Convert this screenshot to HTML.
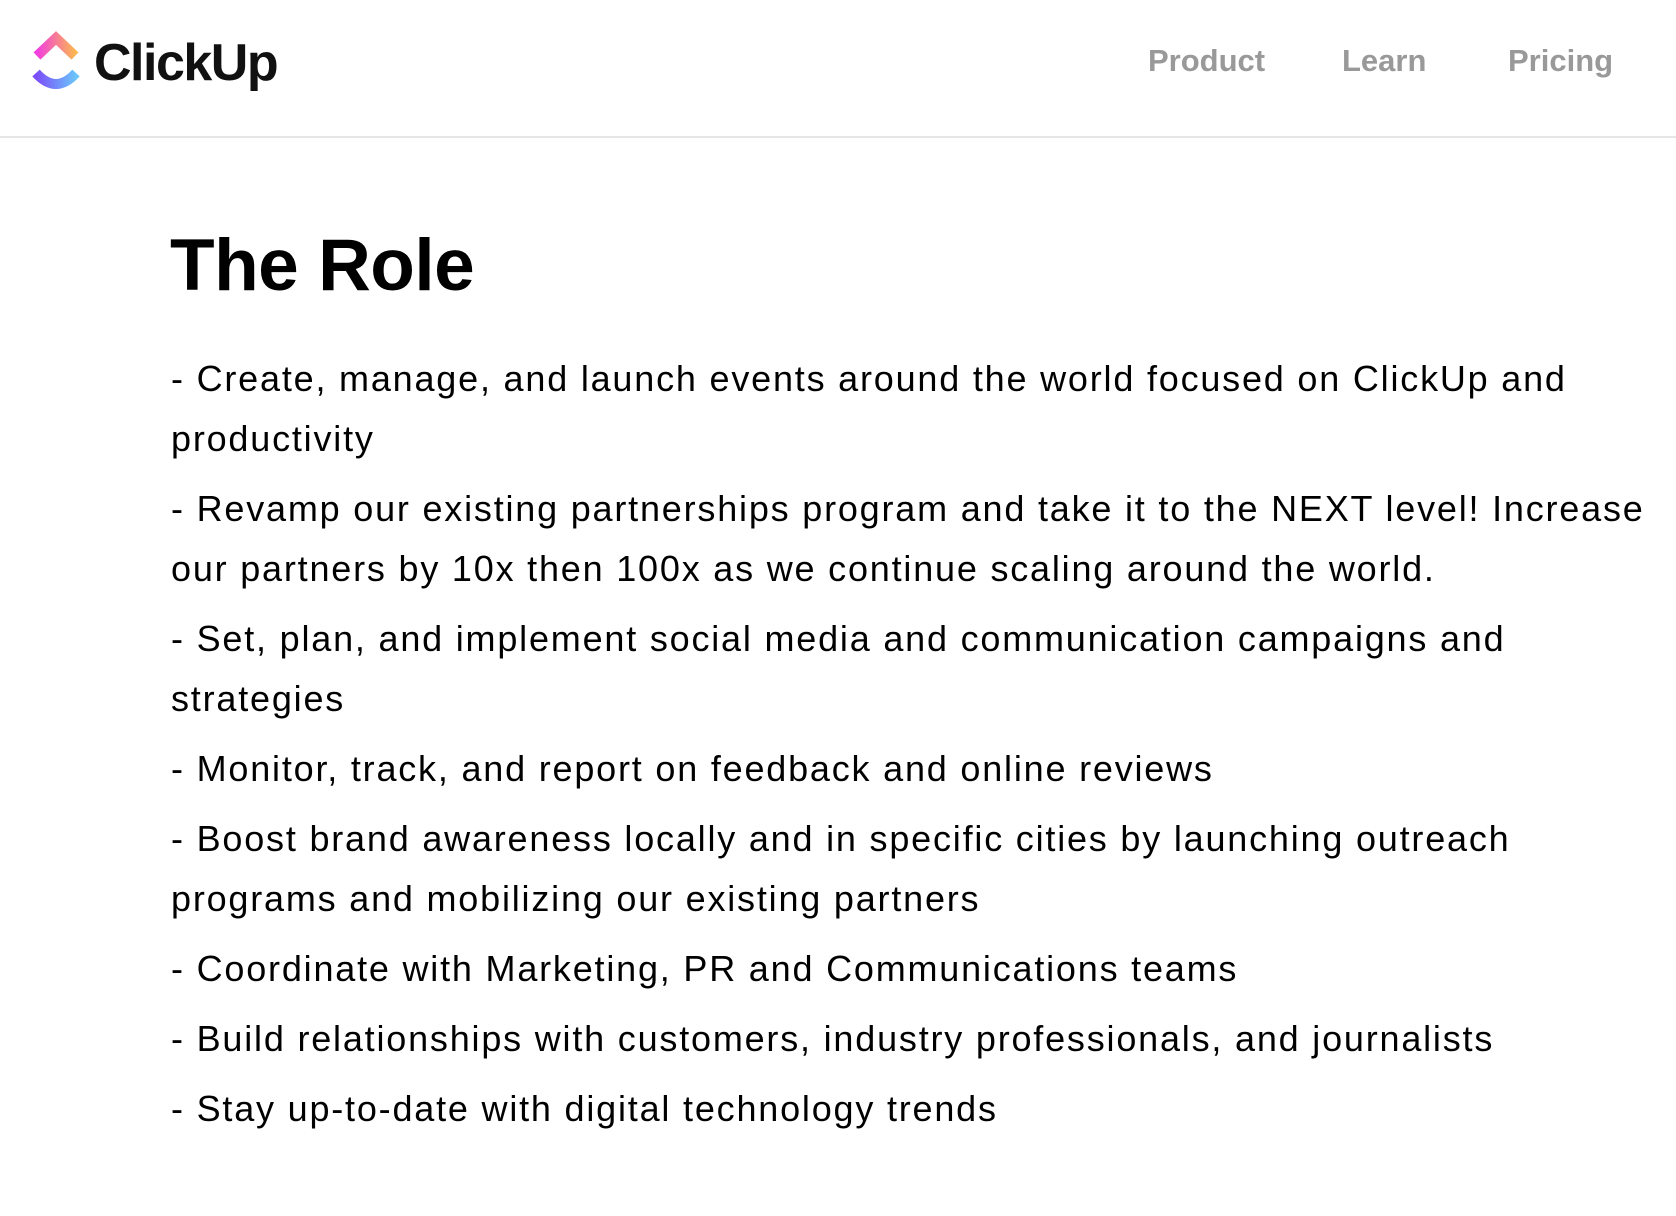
<!DOCTYPE html>
<html><head><meta charset="utf-8"><style>
html,body{margin:0;padding:0;background:#fff;width:1676px;height:1216px;overflow:hidden;font-family:"Liberation Sans",sans-serif;color:#000}
.hdr{position:absolute;left:0;top:0;width:1676px;height:136px;border-bottom:2px solid #e6e6e6}
.logo-t{position:absolute;left:94px;top:28px;font-size:52px;font-weight:bold;letter-spacing:-1.5px;color:#111;line-height:70px}
.nav{position:absolute;top:41px;font-size:31px;font-weight:bold;color:#999;line-height:40px}
h1{position:absolute;left:170px;top:216px;margin:0;font-size:73px;font-weight:bold;line-height:100px;letter-spacing:-0.5px}
.body{position:absolute;left:171px;top:349px;font-size:36px;line-height:60px;white-space:nowrap;letter-spacing:1.8px}
.body p{margin:0 0 10px 0}
</style></head><body>
<div class="hdr">
<svg style="position:absolute;left:28px;top:28px" width="60" height="66" viewBox="28 28 60 66">
<defs>
<linearGradient id="g1" x1="0" y1="0" x2="1" y2="0"><stop offset="0" stop-color="#f23ee0"/><stop offset="1" stop-color="#fbb751"/></linearGradient>
<linearGradient id="g2" x1="0" y1="0" x2="1" y2="0"><stop offset="0" stop-color="#7b4dfa"/><stop offset="1" stop-color="#6bc6fb"/></linearGradient>
</defs>
<polyline points="37,56 56,38 75,56" fill="none" stroke="url(#g1)" stroke-width="10" stroke-linejoin="miter"/>
<path d="M36,73 Q56,95 76,73" fill="none" stroke="url(#g2)" stroke-width="10"/>
</svg>
<div class="logo-t">ClickUp</div>
<div class="nav" style="left:1148px">Product</div>
<div class="nav" style="left:1342px">Learn</div>
<div class="nav" style="left:1508px">Pricing</div>
</div>
<h1>The Role</h1>
<div class="body">
<p>- Create, manage, and launch events around the world focused on ClickUp and<br>productivity</p>
<p>- Revamp our existing partnerships program and take it to the NEXT level! Increase<br>our partners by 10x then 100x as we continue scaling around the world.</p>
<p>- Set, plan, and implement social media and communication campaigns and<br>strategies</p>
<p>- Monitor, track, and report on feedback and online reviews</p>
<p>- Boost brand awareness locally and in specific cities by launching outreach<br>programs and mobilizing our existing partners</p>
<p>- Coordinate with Marketing, PR and Communications teams</p>
<p>- Build relationships with customers, industry professionals, and journalists</p>
<p>- Stay up-to-date with digital technology trends</p>
</div>
</body></html>
